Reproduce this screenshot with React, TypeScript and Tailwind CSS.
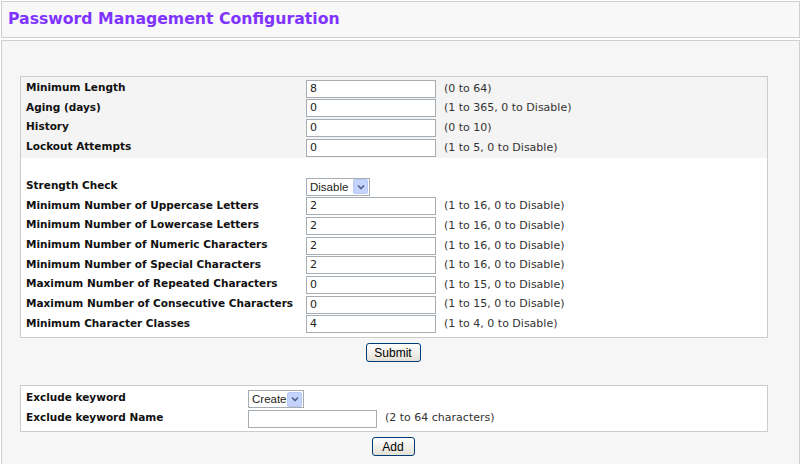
import React from "react";

const groupA = [
  { label: "Minimum Length", value: "8", hint: "(0 to 64)" },
  { label: "Aging (days)", value: "0", hint: "(1 to 365, 0 to Disable)" },
  { label: "History", value: "0", hint: "(0 to 10)" },
  { label: "Lockout Attempts", value: "0", hint: "(1 to 5, 0 to Disable)" },
];

const groupB = [
  { label: "Minimum Number of Uppercase Letters", value: "2", hint: "(1 to 16, 0 to Disable)" },
  { label: "Minimum Number of Lowercase Letters", value: "2", hint: "(1 to 16, 0 to Disable)" },
  { label: "Minimum Number of Numeric Characters", value: "2", hint: "(1 to 16, 0 to Disable)" },
  { label: "Minimum Number of Special Characters", value: "2", hint: "(1 to 16, 0 to Disable)" },
  { label: "Maximum Number of Repeated Characters", value: "0", hint: "(1 to 15, 0 to Disable)" },
  { label: "Maximum Number of Consecutive Characters", value: "0", hint: "(1 to 15, 0 to Disable)" },
  { label: "Minimum Character Classes", value: "4", hint: "(1 to 4, 0 to Disable)" },
];

function TextBox({ value, width = "w-[130px]" }: { value: string; width?: string }) {
  return (
    <div
      className={`${width} h-[18px] border border-[#a5acb2] bg-white pl-[3px] text-[11px] leading-[16px] text-[#222]`}
    >
      {value}
    </div>
  );
}

function Select({ value, width }: { value: string; width: string }) {
  return (
    <div className={`${width} h-[18px] flex items-center border border-[#a5acb2] bg-white`}>
      <span className="flex-1 pl-[3px] text-[11.5px] leading-[16px] text-[#222] font-['Liberation_Sans',sans-serif]">
        {value}
      </span>
      <span className="mr-[1px] flex h-[15px] w-[15px] items-center justify-center rounded-[2px] bg-[#c3d3fd] border border-[#b7caf5]">
        <svg width="8" height="6" viewBox="0 0 8 6">
          <path d="M1 1.5 L4 4.5 L7 1.5" fill="none" stroke="#4d6185" strokeWidth="1.6" />
        </svg>
      </span>
    </div>
  );
}

function Button({ children, width }: { children: React.ReactNode; width: string }) {
  return (
    <div
      className={`${width} h-[19px] flex items-center justify-center rounded-[3px] border border-[#003c74] bg-gradient-to-b from-white to-[#e3e1d6] text-[12px] text-black font-['Liberation_Sans',sans-serif]`}
    >
      {children}
    </div>
  );
}

function Label({ children, width }: { children: React.ReactNode; width: string }) {
  return (
    <div
      className={`${width} shrink-0 whitespace-nowrap pl-[5px] font-bold text-[10.5px] leading-none -mt-[3px] text-[#111]`}
    >
      {children}
    </div>
  );
}

function Row({ label, value, hint }: { label: string; value: string; hint: string }) {
  return (
    <div className="flex h-[19.67px] items-center">
      <Label width="w-[285px]">{label}</Label>
      <TextBox value={value} />
      <div className="pl-[8px] text-[11px] text-[#333]">{hint}</div>
    </div>
  );
}

export default function App() {
  return (
    <div className="w-[801px] h-[464px] overflow-hidden bg-white font-['DejaVu_Sans',Verdana,sans-serif]">
      <div className="mx-[1px] mt-[1px] h-[37px] border border-[#cfcfcf] bg-[#f8f8f8] flex items-center pl-[6px]">
        <h1 className="text-[15.7px] font-bold text-[#8033ff] -mt-[1px]">
          Password Management Configuration
        </h1>
      </div>
      <div className="mx-[1px] mt-[2px] h-[460px] border-l border-t border-r border-[#cfcfcf] bg-[#f6f6f6] pt-[35px] pl-[18px]">
        <div className="w-[748px] border border-[#cccccc] bg-white">
          <div className="bg-[#f4f4f4] pt-[2px]">
            {groupA.map((r) => (
              <Row key={r.label} {...r} />
            ))}
          </div>
          <div className="h-[19px]" />
          <div className="flex h-[20px] items-center">
            <Label width="w-[285px]">Strength Check</Label>
            <Select value="Disable" width="w-[64px]" />
          </div>
          {groupB.map((r) => (
            <Row key={r.label} {...r} />
          ))}
          <div className="h-[3px]" />
        </div>
        <div className="flex w-[748px] justify-center pt-[5px]">
          <div className="ml-[-2px]">
            <Button width="w-[55px]">Submit</Button>
          </div>
        </div>

        <div className="mt-[23px] w-[748px] border border-[#cccccc] bg-white pt-[3px] pb-[3px]">
          <div className="flex h-[20px] items-center">
            <Label width="w-[227px]">Exclude keyword</Label>
            <Select value="Create" width="w-[56px]" />
          </div>
          <div className="flex h-[19px] items-center">
            <Label width="w-[227px]">Exclude keyword Name</Label>
            <TextBox value="" width="w-[129px]" />
            <div className="pl-[8px] text-[11px] text-[#333]">(2 to 64 characters)</div>
          </div>
        </div>
        <div className="flex w-[748px] justify-center pt-[5px]">
          <div className="ml-[-2px]">
            <Button width="w-[43px]">Add</Button>
          </div>
        </div>
      </div>
    </div>
  );
}
